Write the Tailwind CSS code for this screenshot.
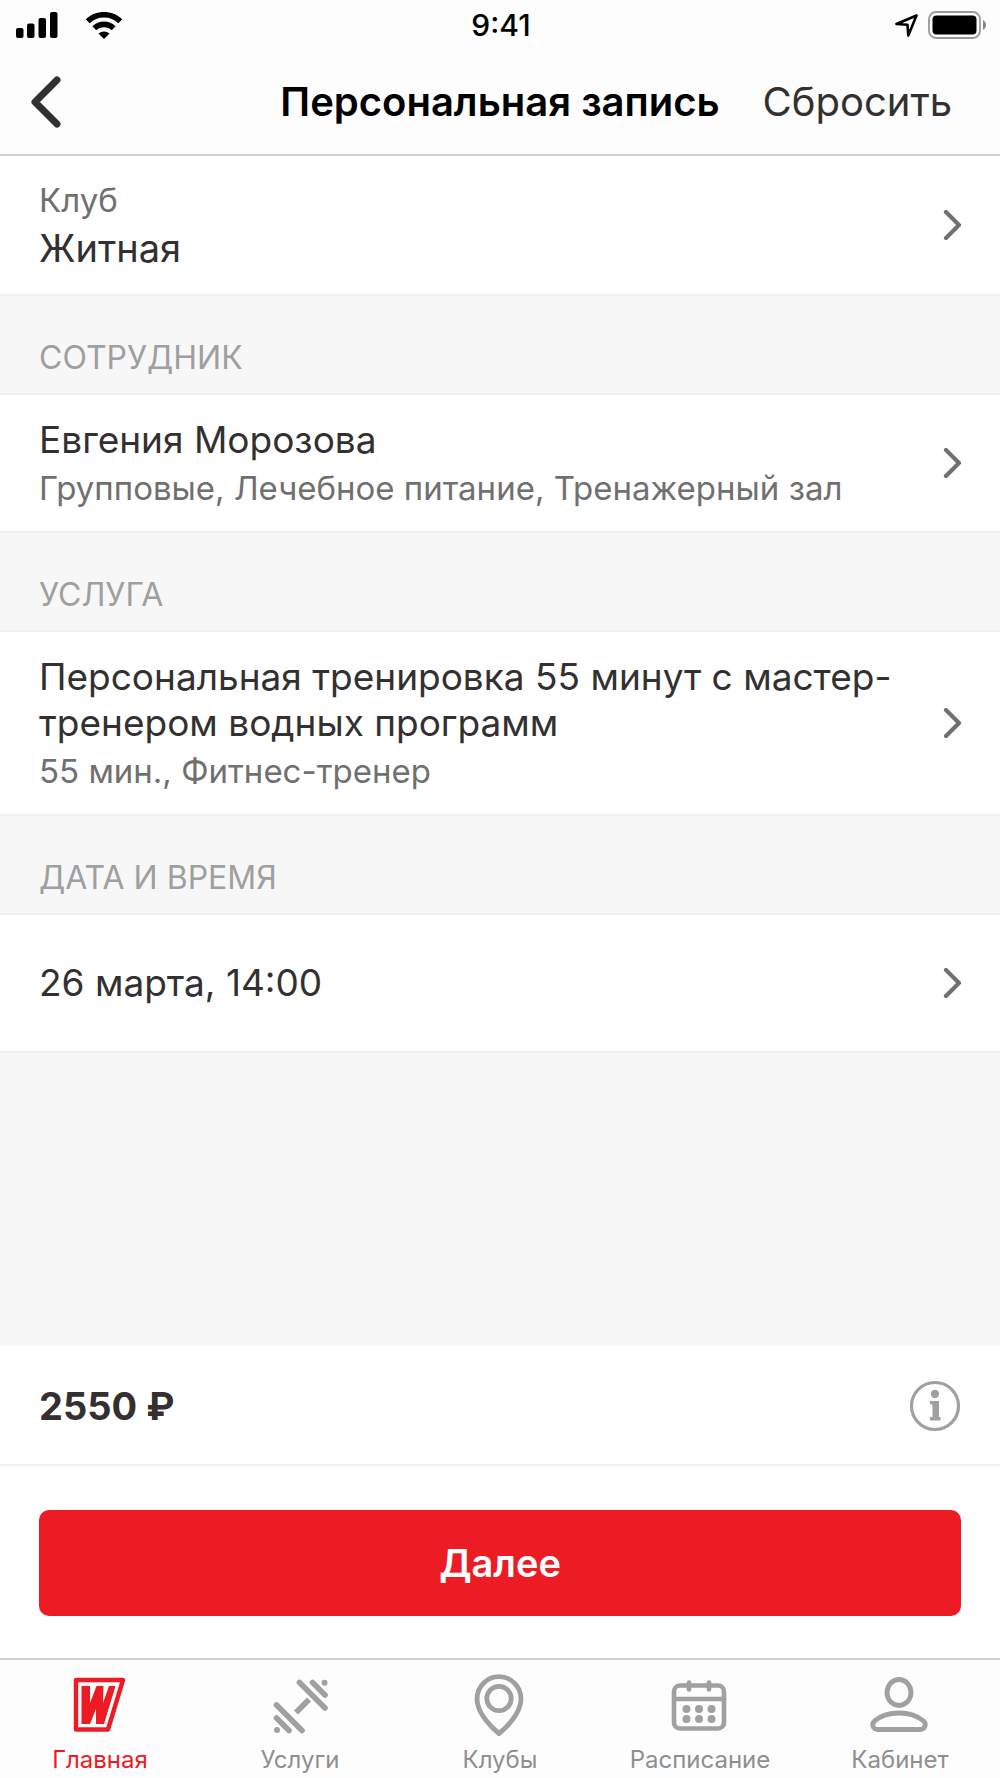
<!DOCTYPE html>
<html lang="ru">
<head>
  <meta charset="UTF-8" />
  <meta name="viewport" content="width=device-width, initial-scale=1.0"/>
  <title>Персональная запись</title>
  <script src="https://cdn.jsdelivr.net/npm/@tailwindcss/browser@4"></script>
  <style>
    body { font-family: 'Inter', 'Liberation Sans', sans-serif; }
  </style>
</head>
<body class="bg-[#f7f7f7] text-[#333031]">
  <div class="min-h-screen flex flex-col">

    <header class="bg-[#fdfdfd] border-b-2 border-[#d0d0d0]">
      <!-- Status bar -->
      <div class="grid grid-cols-3 items-center h-[50px] pl-4 pr-[14px] text-black">
        <div class="flex items-center gap-7">
          <svg class="w-[42px] h-[26px]" viewBox="0 0 42 26" fill="currentColor" aria-hidden="true">
            <rect x="0" y="16" width="7.5" height="10" rx="2"/>
            <rect x="11" y="11.5" width="7.5" height="14.5" rx="2"/>
            <rect x="22.5" y="6" width="7.5" height="20" rx="2"/>
            <rect x="34" y="0" width="7.5" height="26" rx="2"/>
          </svg>
          <svg class="w-[36px] h-[27px]" viewBox="0 0 36 27" fill="none" stroke="currentColor" stroke-width="5.6" aria-hidden="true">
            <path d="M1.7 9.3a23.5 23.5 0 0 1 32.6 0"/>
            <path d="M8.3 16.3a14 14 0 0 1 19.4 0"/>
            <path d="M12.5 21.6a8.5 8.5 0 0 1 11 0L18 27z" fill="currentColor" stroke="none"/>
          </svg>
        </div>
        <span class="text-center text-[30px] leading-none font-medium">9:41</span>
        <div class="flex items-center justify-end gap-[10px]">
          <svg class="w-[23px] h-[23px]" viewBox="0 0 23 23" fill="none" stroke="currentColor" stroke-width="2.6" stroke-linejoin="round" aria-hidden="true">
            <path d="M21.5 1.5 1.5 10l11 .8.8 10.700z"/>
          </svg>
          <svg class="w-[58px] h-[28px]" viewBox="0 0 58 28" aria-hidden="true">
            <rect x="1" y="1" width="51" height="26" rx="7" fill="none" stroke="#999" stroke-width="1.8"/>
            <rect x="4.5" y="4.5" width="44" height="19" rx="4" fill="#000"/>
            <path d="M55 9c4 2 4 8 0 10z" fill="#888"/>
          </svg>
        </div>
      </div>
      <!-- Navigation -->
      <div class="grid grid-cols-[1fr_auto_1fr] items-center h-[104px] px-[30px]">
        <button type="button" aria-label="Назад" class="justify-self-start">
          <svg class="w-8 h-[52px]" viewBox="0 0 32 52" fill="none" stroke="currentColor" stroke-width="7" stroke-linecap="round" stroke-linejoin="round"><path d="M27 4 5 26l22 22"/></svg>
        </button>
        <h1 class="text-[40px] leading-[46px] font-semibold text-black">Персональная запись</h1>
        <button type="button" class="justify-self-end mr-[18px] text-[40px] leading-[46px]">Сбросить</button>
      </div>
    </header>

    <main class="flex flex-col">
      <a href="#club" class="flex items-center bg-white pl-[39px] pr-[38px]">
        <div class="flex-1 pt-[19px] pb-[23px]">
          <p class="text-[33px] leading-[50px] text-[#707070]">Клуб</p>
          <p class="text-[38px] leading-[46px]">Житная</p>
        </div>
        <svg class="w-5 h-[30px]" viewBox="0 0 20 30" fill="none" stroke="#707070" stroke-width="4.2" stroke-linecap="round" stroke-linejoin="round"><path d="m4 2 13 13L4 28"/></svg>
      </a>

      <h2 class="border-y-2 border-[#f0f0f0] px-[39px] pt-[42px] pb-[15px] text-[32px] leading-[40px] text-[#9f9f9f]">СОТРУДНИК</h2>
      <a href="#trainer" class="flex items-center bg-white pl-[39px] pr-[38px]">
        <div class="flex-1 pt-[22px] pb-[18px]">
          <p class="text-[37px] leading-[46px]">Евгения Морозова</p>
          <p class="text-[33px] leading-[50px] text-[#707070]">Групповые, Лечебное питание, Тренажерный зал</p>
        </div>
        <svg class="w-5 h-[30px]" viewBox="0 0 20 30" fill="none" stroke="#707070" stroke-width="4.2" stroke-linecap="round" stroke-linejoin="round"><path d="m4 2 13 13L4 28"/></svg>
      </a>

      <h2 class="border-y-2 border-[#f0f0f0] px-[39px] pt-[42px] pb-[15px] text-[32px] leading-[40px] text-[#9f9f9f]">УСЛУГА</h2>
      <a href="#service" class="flex items-center bg-white pl-[39px] pr-[38px]">
        <div class="flex-1 pt-[22px] pb-[18px]">
          <p class="text-[37px] leading-[46px]">Персональная тренировка 55 минут с мастер-тренером водных программ</p>
          <p class="text-[33px] leading-[50px] text-[#707070]">55 мин., Фитнес-тренер</p>
        </div>
        <svg class="w-5 h-[30px]" viewBox="0 0 20 30" fill="none" stroke="#707070" stroke-width="4.2" stroke-linecap="round" stroke-linejoin="round"><path d="m4 2 13 13L4 28"/></svg>
      </a>

      <h2 class="border-y-2 border-[#f0f0f0] px-[39px] pt-[42px] pb-[15px] text-[32px] leading-[40px] text-[#9f9f9f]">ДАТА И ВРЕМЯ</h2>
      <a href="#date" class="flex items-center bg-white pl-[39px] pr-[38px]">
        <p class="flex-1 py-[45px] text-[37px] leading-[46px]">26 марта, 14:00</p>
        <svg class="w-5 h-[30px]" viewBox="0 0 20 30" fill="none" stroke="#707070" stroke-width="4.2" stroke-linecap="round" stroke-linejoin="round"><path d="m4 2 13 13L4 28"/></svg>
      </a>
    </main>

    <div class="flex-1 border-t-2 border-[#f0f0f0]"></div>

    <!-- Price and submit -->
    <section class="bg-white">
      <div class="flex items-center justify-between pt-[34px] pb-8 px-[39px] border-b-2 border-[#f0f0f0]">
        <span class="text-[38px] leading-[46px] font-bold">2550 ₽</span>
        <button type="button" aria-label="Информация">
          <svg class="w-[52px] h-[52px]" viewBox="0 0 52 52" fill="#a0a0a0">
            <circle cx="26" cy="26" r="23.5" fill="none" stroke="#a0a0a0" stroke-width="3.2"/>
            <circle cx="26" cy="14" r="4.2"/>
            <path d="M21 21h9v16h1.5v3.500H21V37h2.500V24.500H21z"/>
          </svg>
        </button>
      </div>
      <div class="px-[39px] pt-11 pb-[42px]">
        <button type="button" class="w-full h-[106px] rounded-[10px] bg-[#ed1c24] text-white text-[38px] leading-[46px] font-semibold">Далее</button>
      </div>
    </section>

    <!-- Tab bar -->
    <nav class="grid grid-cols-5 bg-[#fdfdfd] border-t-2 border-[#d0d0d0] text-[24px] leading-[28px] text-[#8f8f8f]">
      <a href="#home" class="flex flex-col items-center pt-3 pb-1 text-[#ed1c24]">
        <svg class="w-16 h-16 mb-[10px]" viewBox="0 0 64 64" aria-hidden="true">
          <path d="M8 8H55L40 57.500h-32z" fill="none" stroke="currentColor" stroke-width="4.400" stroke-linejoin="round"/>
          <path d="M13.500 14h8.500v17l6.500-17H35.500l-.5 17L41 14h6.500L36 52h-8V37L22 52h-8.500z" fill="currentColor"/>
        </svg>
        Главная
      </a>
      <a href="#services" class="flex flex-col items-center pt-3 pb-1">
        <svg class="w-16 h-16 mb-[10px]" viewBox="0 0 64 64" fill="none" stroke="#a0a0a0" stroke-width="5.600" stroke-linecap="round" aria-hidden="true">
          <path d="m31.500 10.500 25.500 25.500M44.500 10.500 57 23M8.500 33 34 58.500M8.500 46 21 58.500"/>
          <path d="m28 40.500 13-13" stroke-linecap="butt"/>
          <path d="M56.500 10.700h.01M9 58h.01" stroke-width="6"/>
        </svg>
        Услуги
      </a>
      <a href="#clubs" class="flex flex-col items-center pt-3 pb-1">
        <svg class="w-16 h-16 mb-[10px]" viewBox="0 0 64 64" fill="none" stroke="#a0a0a0" stroke-width="4.800" stroke-linejoin="round" aria-hidden="true">
          <path d="M31 61.500C24.500 56.500 9 41.500 9 27a22 22.300 0 0 1 44 0C53 41.500 37.500 56.500 31 61.500z"/>
          <circle cx="31" cy="26.500" r="12.200"/>
        </svg>
        Клубы
      </a>
      <a href="#schedule" class="flex flex-col items-center pt-3 pb-1">
        <svg class="w-16 h-16 mb-[10px]" viewBox="0 0 64 64" fill="none" stroke="#a0a0a0" stroke-width="4.600" stroke-linecap="round" aria-hidden="true">
          <rect x="6" y="13.500" width="50" height="43" rx="6"/>
          <path d="M7 27h48M21 10.500v7M41 10.500v7"/>
          <g fill="#a0a0a0" stroke="none">
            <circle cx="18.500" cy="37" r="4"/><circle cx="31" cy="37" r="4"/><circle cx="43.500" cy="37" r="4"/>
            <circle cx="18.500" cy="47" r="4"/><circle cx="31" cy="47" r="4"/><circle cx="43.500" cy="47" r="4"/>
          </g>
        </svg>
        Расписание
      </a>
      <a href="#profile" class="flex flex-col items-center pt-3 pb-1">
        <svg class="w-16 h-16 mb-[10px]" viewBox="0 0 64 64" fill="none" stroke="#a0a0a0" stroke-width="4.800" aria-hidden="true">
          <ellipse cx="31" cy="20.500" rx="12" ry="13"/>
          <path d="M10 57.500h42c5 0 7-5.500 3.500-8.500C48.500 43 40.500 41 31 41S13.500 43 6.500 49c-3.500 3-1.500 8.500 3.500 8.500z"/>
        </svg>
        Кабинет
      </a>
    </nav>

  </div>
</body>
</html>
